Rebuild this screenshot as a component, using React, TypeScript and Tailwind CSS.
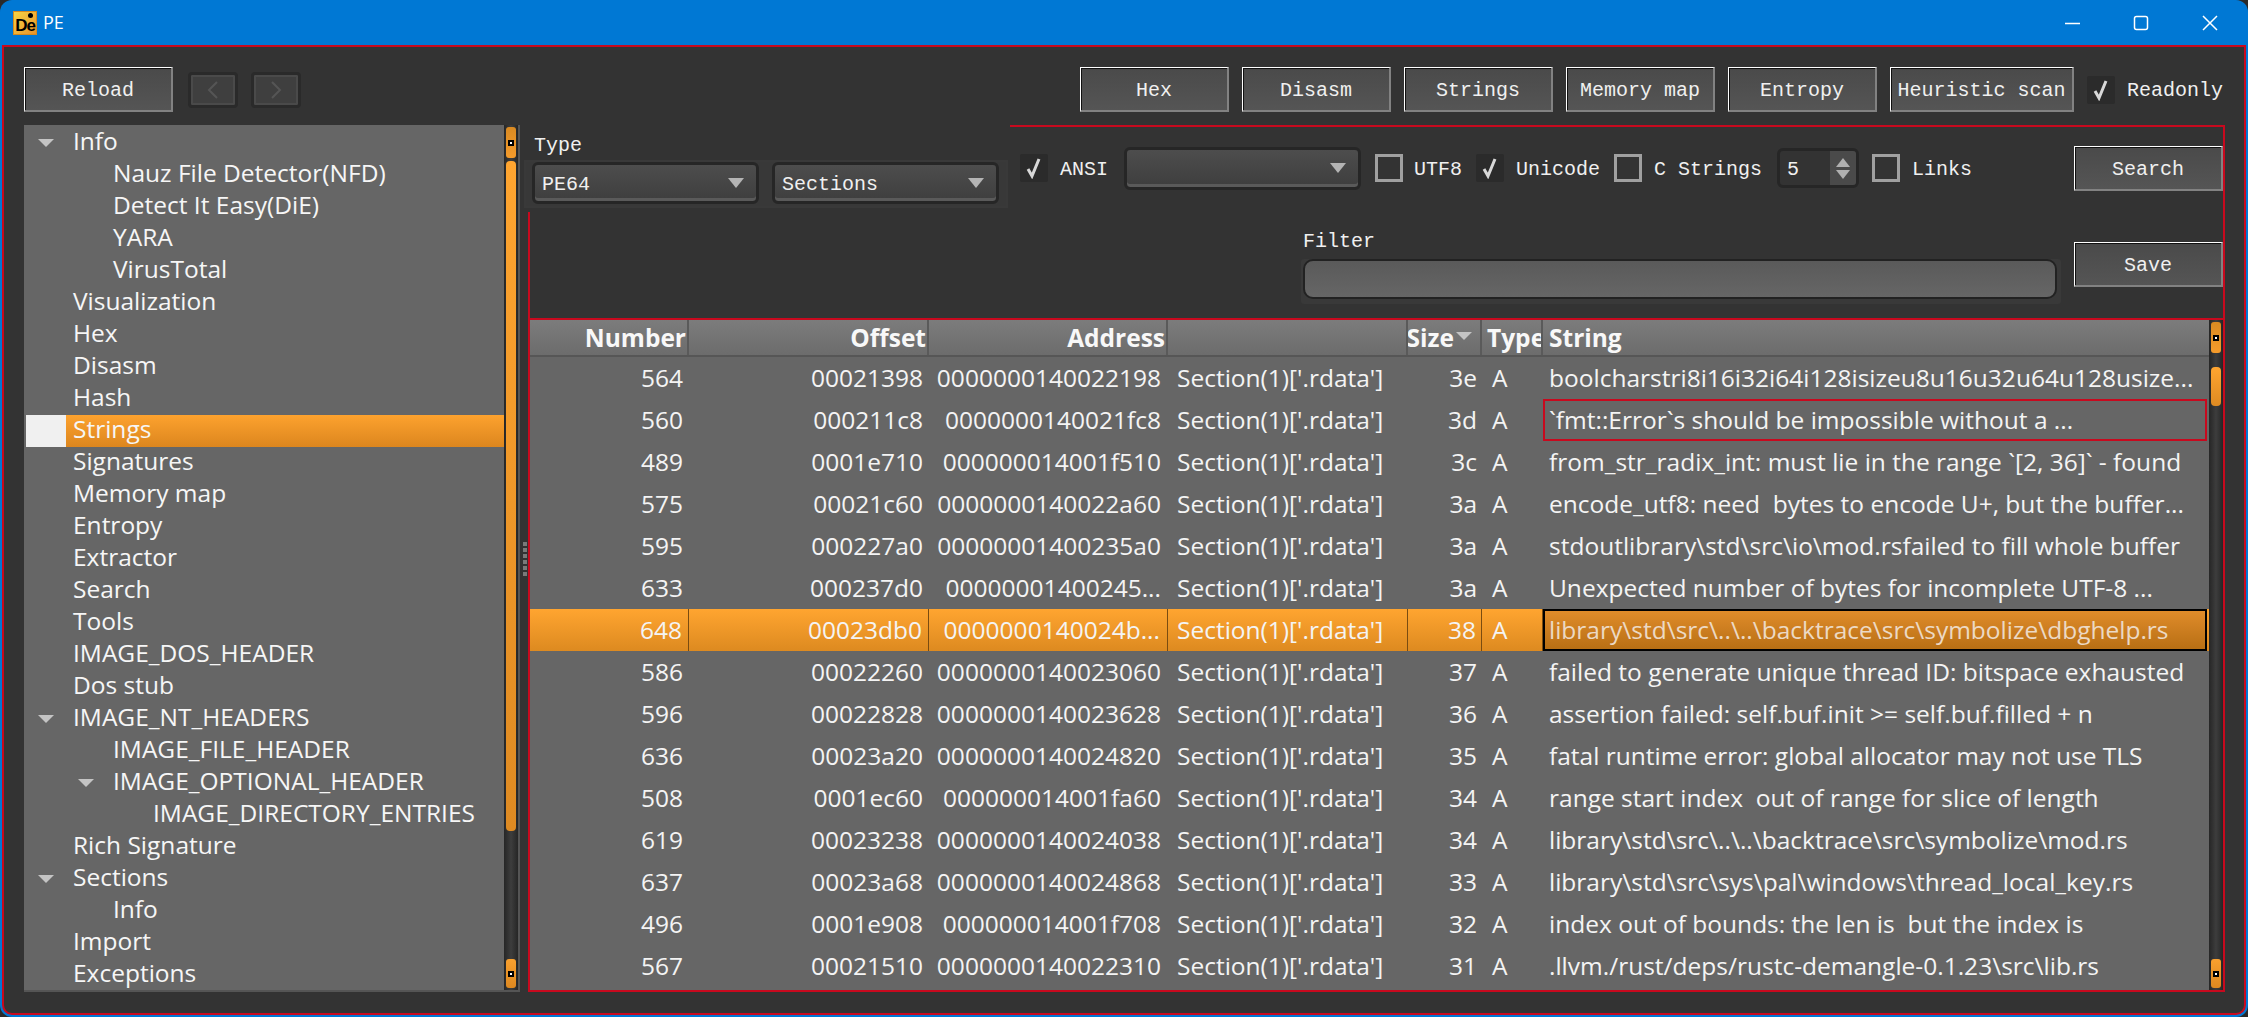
const sans = "font-['Open_Sans',sans-serif]";
const rows: string[][] = [
  ["564","00021398","0000000140022198","3e","boolcharstri8i16i32i64i128isizeu8u16u32u64u128usize..."],
  ["560","000211c8","0000000140021fc8","3d","`fmt::Error`s should be impossible without a ..."],
  ["489","0001e710","000000014001f510","3c","from_str_radix_int: must lie in the range `[2, 36]` - found"],
  ["575","00021c60","0000000140022a60","3a","encode_utf8: need  bytes to encode U+, but the buffer..."],
  ["595","000227a0","00000001400235a0","3a","stdoutlibrary\\std\\src\\io\\mod.rsfailed to fill whole buffer"],
  ["633","000237d0","00000001400245...","3a","Unexpected number of bytes for incomplete UTF-8 ..."],
  ["648","00023db0","0000000140024b...","38","library\\std\\src\\..\\..\\backtrace\\src\\symbolize\\dbghelp.rs"],
  ["586","00022260","0000000140023060","37","failed to generate unique thread ID: bitspace exhausted"],
  ["596","00022828","0000000140023628","36","assertion failed: self.buf.init >= self.buf.filled + n"],
  ["636","00023a20","0000000140024820","35","fatal runtime error: global allocator may not use TLS"],
  ["508","0001ec60","000000014001fa60","34","range start index  out of range for slice of length"],
  ["619","00023238","0000000140024038","34","library\\std\\src\\..\\..\\backtrace\\src\\symbolize\\mod.rs"],
  ["637","00023a68","0000000140024868","33","library\\std\\src\\sys\\pal\\windows\\thread_local_key.rs"],
  ["496","0001e908","000000014001f708","32","index out of bounds: the len is  but the index is"],
  ["567","00021510","0000000140022310","31",".llvm./rust/deps/rustc-demangle-0.1.23\\src\\lib.rs"],
];
const tree: [string, number, boolean?][] = [
  ["Info",1,true],["Nauz File Detector(NFD)",2],["Detect It Easy(DiE)",2],["YARA",2],["VirusTotal",2],
  ["Visualization",1],["Hex",1],["Disasm",1],["Hash",1],["Strings",1],["Signatures",1],["Memory map",1],
  ["Entropy",1],["Extractor",1],["Search",1],["Tools",1],["IMAGE_DOS_HEADER",1],["Dos stub",1],
  ["IMAGE_NT_HEADERS",1,true],["IMAGE_FILE_HEADER",2],["IMAGE_OPTIONAL_HEADER",2,true],["IMAGE_DIRECTORY_ENTRIES",3],
  ["Rich Signature",1],["Sections",1,true],["Info",2],["Import",1],["Exceptions",1],
];
const cols = "grid grid-cols-[159px_240px_239px_240px_74px_61px_664px]";

function Btn({ label, w, className = "" }: { label: string; w: string; className?: string }) {
  return (
    <div className={`${w} ${className} h-[45px] shrink-0 flex items-center justify-center pt-[4px] border-t border-l border-r-2 border-b-2 border-t-white border-l-white border-r-[#828282] border-b-[#828282] shadow-[inset_1px_1px_0_#111111] bg-gradient-to-b from-[#4a4a4a] to-[#555555] text-[20px] text-[#f0f0f0] font-['Liberation_Mono',monospace] whitespace-pre`}>
      {label}
    </div>
  );
}
function Check({ on }: { on?: boolean }) {
  return on ? (
    <div className="w-[28px] h-[28px] shrink-0 bg-[#2b2b2b] rounded-[2px] flex items-center justify-center">
      <svg width="18" height="22" viewBox="0 0 18 22" fill="none"><path d="M3 12l4 7L14 2" stroke="#d8d8d8" strokeWidth="3" /></svg>
    </div>
  ) : (
    <div className="w-[28px] h-[28px] shrink-0 border-[3px] border-[#a0a0a0]" />
  );
}
function Combo({ label, w, h = "h-[42px]" }: { label: string; w: string; h?: string }) {
  return (
    <div className={`${w} ${h} shrink-0 flex items-center justify-between pl-[7px] pr-[12px] rounded-[6px] border-[3px] border-[#262626] bg-gradient-to-b from-[#4d4d4d] to-[#3e3e3e] shadow-[inset_0_-3px_0_#5a5a5a]`}>
      <span className="pt-[3px] text-[20px] text-[#f0f0f0] font-['Liberation_Mono',monospace]">{label}</span>
      <span className="w-0 h-0 border-x-[8px] border-x-transparent border-t-[10px] border-t-[#b4b4b4]" />
    </div>
  );
}
function Lbl({ children, className = "" }: { children: React.ReactNode; className?: string }) {
  return <span className={`pt-[3px] text-[20px] text-[#f0f0f0] font-['Liberation_Mono',monospace] whitespace-pre ${className}`}>{children}</span>;
}
function Dot() {
  return <span className="w-[6px] h-[6px] bg-black flex items-center justify-center"><span className="w-[2px] h-[2px] bg-white" /></span>;
}
function Scroll({ thumbTop, thumbH, h }: { thumbTop: string; thumbH: string; h: string }) {
  return (
    <div className={`w-[14px] ${h} shrink-0 bg-gradient-to-r from-[#262626] via-[#3d3d3d] to-[#262626] flex flex-col items-center`}>
      <div className="w-[10px] h-[31px] mt-[2px] rounded-[3px] bg-gradient-to-b from-[#d98a22] to-[#f59b2b] flex items-center justify-center shrink-0"><Dot /></div>
      <div className={`w-[10px] ${thumbTop} ${thumbH} rounded-[4px] bg-gradient-to-b from-[#ffa530] to-[#de8a22] shrink-0`} />
      <div className="flex-1" />
      <div className="w-[10px] h-[29px] mb-[2px] rounded-[3px] bg-gradient-to-b from-[#f9a02e] to-[#dd8820] flex items-center justify-center shrink-0"><Dot /></div>
    </div>
  );
}
function Row({ r, i }: { r: string[]; i: number }) {
  const sel = i === 6;
  const boxed = i === 1;
  const base = "h-[42px] flex items-center overflow-hidden whitespace-pre";
  const sep = sel ? "border-r border-r-[#7a4c10]" : "";
  return (
    <div className={`${cols} h-[42px] text-[24.5px] ${sel ? "bg-gradient-to-b from-[#ffa530] to-[#dd8a20]" : ""} text-[#f4f4f4]`}>
      <div className={`${base} ${sep} justify-end pr-[6px]`}>{r[0]}</div>
      <div className={`${base} ${sep} justify-end pr-[6px]`}>{r[1]}</div>
      <div className={`${base} ${sep} justify-end pr-[7px]`}>{r[2]}</div>
      <div className={`${base} ${sep} pl-[9px]`}>Section(1)['.rdata']</div>
      <div className={`${base} ${sep} justify-end pr-[5px]`}>{r[3]}</div>
      <div className={`${base} ${sep} pl-[10px]`}>A</div>
      <div className={`${base} ${boxed ? "pl-[4px] border-2 border-[#c8091e]" : sel ? "pl-[4px] border-2 border-black bg-gradient-to-b from-[#e08c2a] to-[#b86f14] text-[#ecd9c4]" : "pl-[6px]"}`}>{r[4]}</div>
    </div>
  );
}

export default function App() {
  return (
    <div className="w-[2248px] h-[1017px] bg-[#2a2a2a] overflow-hidden">
      <div className={`w-full h-full rounded-[12px] bg-[#0078d4] overflow-hidden flex flex-col ${sans}`}>
        <div className="h-[45px] shrink-0 flex items-center pl-[13px] text-white">
          <div className="relative w-[24px] h-[24px] border border-[#d78a1e] bg-gradient-to-br from-[#f6d544] to-[#e8922a] flex items-end justify-center leading-none">
            <span className="text-[17px] font-bold text-black tracking-[-1px] font-['Liberation_Sans',sans-serif]">De</span>
            <span className="absolute left-[14px] top-[1px] w-[5px] h-[5px] rounded-full bg-black" />
          </div>
          <span className="ml-[6px] text-[18px]">PE</span>
          <div className="flex-1" />
          <svg width="180" height="20" viewBox="0 0 180 20" fill="none" stroke="white" strokeWidth="1.5" className="mr-[3px]">
            <path d="M0 10.5h15" />
            <rect x="69.5" y="3.5" width="13" height="13" rx="2" />
            <path d="M138 3l14 14M152 3l-14 14" />
          </svg>
        </div>
        <div className="flex-1 mx-[2px] mb-[2px] border-2 border-[#c8091e] bg-[#333333] rounded-b-[10px] px-[20px] pt-[20px] flex flex-col min-h-0">
          <div className="h-[45px] shrink-0 flex items-center">
            <Btn label="Reload" w="w-[149px]" />
            <div className="ml-[15px] w-[50px] h-[36px] rounded-[4px] border-[3px] border-[#2a2a2a] bg-[#3f3f3f] shadow-[inset_0_0_0_2px_#4a4a4a] flex items-center justify-center">
              <svg width="14" height="20" viewBox="0 0 14 20" fill="none" stroke="#555555" strokeWidth="2"><path d="M11 2L3 10l8 8" /></svg>
            </div>
            <div className="ml-[13px] w-[50px] h-[36px] rounded-[4px] border-[3px] border-[#2a2a2a] bg-[#3f3f3f] shadow-[inset_0_0_0_2px_#4a4a4a] flex items-center justify-center">
              <svg width="14" height="20" viewBox="0 0 14 20" fill="none" stroke="#555555" strokeWidth="2"><path d="M3 2l8 8-8 8" /></svg>
            </div>
            <div className="flex-1" />
            <div className="flex items-center gap-[13px]">
              <Btn label="Hex" w="w-[149px]" />
              <Btn label="Disasm" w="w-[149px]" />
              <Btn label="Strings" w="w-[149px]" />
              <Btn label="Memory map" w="w-[149px]" />
              <Btn label="Entropy" w="w-[149px]" />
              <Btn label="Heuristic scan" w="w-[184px]" />
            </div>
            <div className="ml-[13px] flex items-center gap-[12px] mr-[2px] w-[135px]">
              <Check on />
              <Lbl>Readonly</Lbl>
            </div>
          </div>
          <div className="flex mt-[13px] h-[867px] shrink-0">
            <div className="w-[496px] shrink-0 flex bg-[#666666] text-[24.5px] text-[#f6f6f6] border-b-2 border-b-[#555555]">
              <div className="flex-1 pt-[2px] leading-none">
                {tree.map(([t, lvl, open], i) => {
                  const active = i === 9;
                  return (
                    <div key={i} className="relative h-[32px] flex items-center">
                      {active && <span className="absolute left-[2px] top-0 w-[40px] h-full bg-[#f0f0f0]" />}
                      {active && <span className="absolute left-[42px] right-0 top-0 h-full bg-gradient-to-b from-[#fda22e] to-[#dc861e]" />}
                      <span className={`relative pb-[4px] ${lvl === 1 ? "pl-[49px]" : lvl === 2 ? "pl-[89px]" : "pl-[129px]"}`}>{t}</span>
                      {open && (
                        <span className={`absolute top-[12px] w-0 h-0 border-x-[8px] border-x-transparent border-t-[8px] border-t-[#c4c4c4] ${lvl === 1 ? "left-[14px]" : "left-[54px]"}`} />
                      )}
                    </div>
                  );
                })}
              </div>
              <Scroll thumbTop="mt-[3px]" thumbH="h-[670px]" h="h-full" />
              <div className="w-[2px] bg-[#555555]" />
            </div>
            <div className="w-[8px] shrink-0 flex flex-col items-center justify-center gap-[2px] pl-[2px]">
              {[0, 1, 2, 3, 4, 5].map((n) => (
                <span key={n} className="w-[4px] h-[4px] bg-[#7a7a7a]" />
              ))}
            </div>
            <div className="relative flex-1 border-2 border-[#c8091e] flex flex-col">
              <div className="absolute left-[-8px] top-[-2px] w-[488px] h-[87px] bg-[#333333]">
                <div className="ml-[12px] mt-[3px] h-[32px] flex items-center"><Lbl>Type</Lbl></div>
                <div className="ml-[2px] mr-[2px] border-2 border-[#393939] h-[48px] bg-[#383838] flex gap-[13px] pl-[6px]">
                  <Combo label="PE64" w="w-[227px]" />
                  <Combo label="Sections" w="w-[227px]" />
                </div>
              </div>
              <div className="h-[191px] shrink-0 flex flex-col">
                <div className="h-[82px] flex items-center">
                  <div className="w-[490px] shrink-0" />
                  <Check on />
                  <Lbl className="ml-[12px] w-[64px]">ANSI</Lbl>
                  <Combo label="" w="w-[237px]" h="h-[43px]" />
                  <div className="ml-[14px]"><Check /></div>
                  <Lbl className="ml-[11px] w-[62px]">UTF8</Lbl>
                  <Check on />
                  <Lbl className="ml-[12px] w-[98px]">Unicode</Lbl>
                  <Check />
                  <Lbl className="ml-[12px] w-[123px]">C Strings</Lbl>
                  <div className="w-[82px] h-[40px] rounded-[6px] border-[3px] border-[#262626] flex items-center justify-between bg-[#333333]">
                    <span className="pl-[7px] pt-[3px] text-[20px] text-[#f0f0f0] font-['Liberation_Mono',monospace]">5</span>
                    <div className="w-[26px] h-full rounded-r-[3px] bg-[#4a4a4a] flex flex-col items-center justify-center gap-[3px]">
                      <span className="w-0 h-0 border-x-[7px] border-x-transparent border-b-[9px] border-b-[#b0b0b0]" />
                      <span className="w-0 h-0 border-x-[7px] border-x-transparent border-t-[9px] border-t-[#b0b0b0]" />
                    </div>
                  </div>
                  <div className="ml-[13px]"><Check /></div>
                  <Lbl className="ml-[12px]">Links</Lbl>
                  <div className="flex-1" />
                  <Btn label="Search" w="w-[149px]" />
                </div>
                <div className="flex flex-1 items-end pb-[14px]">
                  <div className="ml-[771px] w-[760px] shrink-0">
                    <div className="h-[30px] flex items-center pl-[2px] pb-[8px]"><Lbl>Filter</Lbl></div>
                    <div className="h-[45px] bg-[#393939] rounded-[3px] pb-[5px] pr-[4px] pl-[2px]">
                      <div className="h-[40px] rounded-[10px] border-2 border-[#222222] bg-gradient-to-b from-[#5a5a5a] to-[#666666]" />
                    </div>
                  </div>
                  <div className="flex-1" />
                  <Btn label="Save" w="w-[149px]" className="mb-[17px]" />
                </div>
              </div>
              <div className="flex-1 min-h-0 border-t-2 border-[#c8091e] flex bg-[#666666]">
                <div className="w-[1679px] shrink-0 flex flex-col">
                  <div className={`${cols} h-[37px] shrink-0 bg-gradient-to-b from-[#7c7c7c] to-[#6c6c6c] border-b-2 border-b-[#565656] text-[24.5px] font-bold text-[#f8f8f8] whitespace-pre leading-none`}>
                    <div className="flex items-center justify-end pt-[2px] pr-px border-r-2 border-r-[#5a5a5a]">Number</div>
                    <div className="flex items-center justify-end pt-[2px] pr-px border-r-2 border-r-[#5a5a5a]">Offset</div>
                    <div className="flex items-center justify-end pt-[2px] pr-px border-r-2 border-r-[#5a5a5a]">Address</div>
                    <div className="border-r-2 border-r-[#5a5a5a]" />
                    <div className="relative flex items-center justify-end pt-[2px] pr-[26px] overflow-hidden border-r-2 border-r-[#5a5a5a]">
                      <span>Size</span>
                      <span className="absolute right-[8px] top-[12px] w-0 h-0 border-x-[8px] border-x-transparent border-t-[8px] border-t-[#c4c4c4]" />
                    </div>
                    <div className="flex items-center pt-[2px] pl-[5px] overflow-hidden border-r-2 border-r-[#5a5a5a]">Type</div>
                    <div className="flex items-center pt-[2px] pl-[6px]">String</div>
                  </div>
                  {rows.map((r, i) => (
                    <Row key={i} r={r} i={i} />
                  ))}
                </div>
                <Scroll thumbTop="mt-[14px]" thumbH="h-[39px]" h="h-full" />
              </div>
            </div>
          </div>
        </div>
      </div>
    </div>
  );
}
